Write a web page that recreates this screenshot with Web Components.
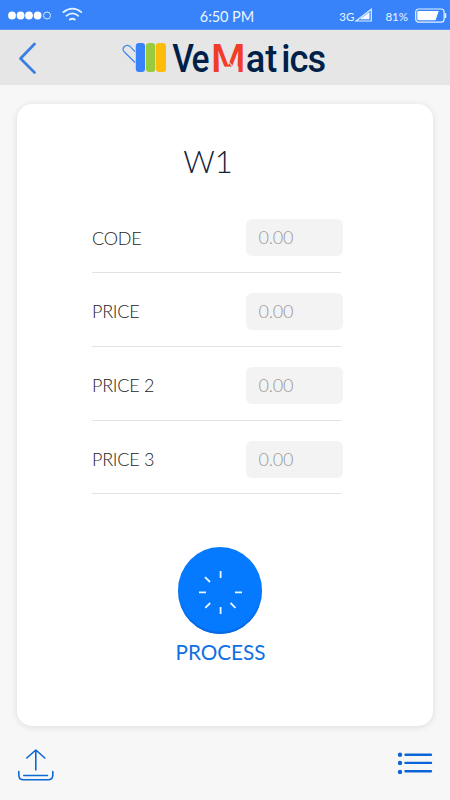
<!DOCTYPE html>
<html lang="en">
<head>
<meta charset="utf-8">
<title>VeMatics</title>
<style>
html,body{margin:0;height:100%}
body{background:#f7f7f7;font-family:Lato,"Liberation Sans",sans-serif;overflow:hidden}
</style>
</head>
<body>
<vm-app></vm-app>
<script>
function define(name, html, setup) {
  const t = document.createElement('template');
  t.innerHTML = html;
  customElements.define(name, class extends HTMLElement {
    constructor() {
      super();
      this.attachShadow({mode: 'open'}).appendChild(t.content.cloneNode(true));
      if (setup) setup(this.shadowRoot);
    }
  });
}

define('vm-status-bar', `
<style>
:host{display:flex;height:30px;box-sizing:border-box;background:#3983fa;color:#e9f6ff;border-bottom:1px solid #5c94f0;align-items:center;justify-content:space-between;flex:none}
svg{display:block;overflow:visible;flex:none}
.g{display:flex;align-items:center;width:150px}
.left{padding-left:8px;gap:11px;box-sizing:border-box}
.right{justify-content:flex-end;padding-right:4px;box-sizing:border-box}
.time{font-size:14.5px;line-height:20px;padding:4px 0 0 4px;white-space:nowrap;letter-spacing:-.05px}
.net{font-size:11.5px;line-height:14px;padding-top:5px;margin-right:1px}
.pct{font-size:11.5px;line-height:14px;padding-top:4px;margin:0 7px 0 13px}
.bat{margin-top:2px}
</style>
<div class="g left">
<svg width="43" height="10" viewBox="0 0 43 10" fill="#fff"><circle cx="4" cy="5.5" r="3.9"/><circle cx="12.6" cy="5.5" r="3.9"/><circle cx="21" cy="5.5" r="3.9"/><circle cx="29.6" cy="5.5" r="3.9"/><circle cx="39" cy="5.5" r="3.5" fill="none" stroke="#d5ecff" stroke-width="1"/></svg>
<svg width="20" height="14" viewBox="0 0 20 14" fill="none" stroke="#e4f4ff" stroke-width="1.7" stroke-linecap="round"><path d="M1.3 4.2Q10.5-2.8 19.3 4.2M4.3 7.8Q10.4 2.9 16.3 7.8"/><path d="M7.9 11.6Q10.4 9.8 12.7 11.6" stroke-width="1.9"/></svg>
</div>
<span class="time">6:50 PM</span>
<div class="g right">
<span class="net">3G</span>
<svg width="17" height="14" viewBox="0 0 17 14"><path d="M1 13L16.3 1.3V13Z" fill="none" stroke="#dff2ff" stroke-width="1.2"/><path d="M4.8 11.3L14.5 4V11.3Z" fill="#f2faff"/></svg>
<span class="pct">81%</span>
<svg class="bat" width="31" height="15" viewBox="0 0 31 15"><rect x=".7" y="1" width="28.4" height="13.2" rx="3" fill="none" stroke="#e4f4ff" stroke-width="1.2"/><path d="M3.5 3H23.8L20.5 12.3H3.5Q2.3 12.3 2.3 11V4.2Q2.3 3 3.5 3Z" fill="#fff"/><path d="M30.5 5.2V10" stroke="#e4f4ff" stroke-width="1.5"/></svg>
</div>`);

define('vm-logo', `
<style>
:host{display:block;width:204px;height:34px}
svg{display:block;overflow:visible}
text{font-family:Roboto,"Liberation Sans",sans-serif;font-size:39.5px;font-weight:500;fill:#001f49}
.m{fill:#f03c28}
.tail{font-size:39px}
</style>
<svg width="204" height="34" viewBox="0 0 204 34">
<path d="M13 21.5L2.2 10.8C-.8 7.3 3.2 2.7 7.8 5.2L13 10.7" fill="none" stroke="#3f84ec" stroke-width="1.2"/>
<rect x="13.8" y="2" width="9.2" height="29" rx="3" fill="#3983fa"/>
<rect x="24" y="2" width="9.2" height="29" rx="3" fill="#9acb3c"/>
<rect x="34" y="2" width="10" height="29" rx="3" fill="#fdbb0a"/>
<text transform="scale(.85 1)" x="59.2 81.8" y="31">Ve</text>
<text class="m" x="89" y="31">M</text>
<path d="M97 25.6H116.5V31.5H97Z" fill="#e6e6e6"/>
<path d="M106.3 20.5L110.8 26" stroke="#e6e6e6" stroke-width="1.1"/>
<text class="tail" transform="scale(.93 1)" x="133 154 171.2 180.2 199.6" y="31">atics</text>
</svg>`);

define('vm-header', `
<style>
:host{display:grid;grid-template-columns:104px auto 1fr;height:55px;background:#e6e6e6;align-items:center;flex:none;box-sizing:border-box;padding-left:18px}
svg{display:block}
::slotted(vm-logo){margin-top:1px}
</style>
<svg width="20" height="32" viewBox="0 0 20 32" fill="none" stroke="#397fe3" stroke-width="2.7" stroke-linecap="round" stroke-linejoin="round"><path d="M16.5 2L2.5 16.5L16.5 30.5"/></svg>
<slot></slot>`);

define('vm-field', `
<style>
:host{display:flex;height:73.8px;box-sizing:border-box;padding-top:4px;border-bottom:1px solid #e2e2e2;justify-content:space-between;align-items:center;color:#1c1c1c;font-size:18px;font-weight:300}
.label{line-height:24px;white-space:nowrap;letter-spacing:-.25px}
.value{box-sizing:border-box;width:97px;height:37px;border-radius:6px;background:#f3f3f3;color:#999;line-height:37px;padding-left:12.6px;margin-right:-2px;letter-spacing:-.2px}
</style>
<span class="label"><slot></slot></span><span class="value">0.00</span>`);

define('vm-process', `
<style>
:host{display:flex;flex-direction:column;align-items:center;color:#0f70e4}
.disc{width:84px;height:87px;border-radius:50%;background:#057aff;box-shadow:inset 0 -2px 1px #0868e0}
svg{display:block}
.label{font-size:20.7px;line-height:26px;margin-top:5px}
</style>
<div class="disc"><svg width="84" height="87" viewBox="0 0 84 87" stroke="#e9f8ff" stroke-width="1.8" fill="none"><path d="M42.6 24V31M42.6 60V67M21 45.3H28M57 45.3H64M27 30.2L32 35M27.3 60.8L32.2 56M52.5 56L57.5 60.8"/></svg></div>
<span class="label"><slot></slot></span>`);

define('vm-card', `
<style>
:host{display:flex;flex-direction:column;box-sizing:border-box;margin:19px 17px 0;height:622px;border-radius:15px;background:#fff;box-shadow:0 1px 7px rgba(0,0,0,.11);align-items:center;flex:none}
h1{margin:37px 34px 0 0;font-size:31px;line-height:40px;font-weight:300;color:#132139}
.fields{width:249px;margin:18.3px 17px 0 0}
vm-process{margin:53px 9px 0 0}
</style>
<h1>W1</h1>
<div class="fields"><vm-field>CODE</vm-field><vm-field>PRICE</vm-field><vm-field>PRICE 2</vm-field><vm-field>PRICE 3</vm-field></div>
<vm-process>PROCESS</vm-process>`);

define('vm-toolbar', `
<style>
:host{display:flex;justify-content:space-between;align-items:flex-start;padding:22px 17px 0 17px}
svg{display:block}
</style>
<svg width="38" height="34" viewBox="0 0 38 34" fill="none" stroke="#0b68d4" stroke-width="1.6" stroke-linecap="round" stroke-linejoin="round"><path d="M18.8 22V2.5M9.8 10L18.8 2L27.8 10M1.8 23.5V27Q1.8 31.7 6.5 31.7H31Q35.8 31.7 35.8 27V23.5M6.8 27.5H30.5"/></svg>
<svg width="36" height="26" viewBox="0 0 36 26" fill="#0b65d8"><circle cx="3" cy="6.7" r="2.2"/><circle cx="3" cy="15" r="2.2"/><circle cx="3" cy="24" r="2.2"/><path d="M8.5 6.7H34M8.5 14.9H34M8.5 23.2H34" stroke="#0b65d8" stroke-width="2.4" stroke-linecap="round"/></svg>`);

define('vm-app', `
<style>:host{display:flex;flex-direction:column;width:450px;height:800px}</style>
<vm-status-bar></vm-status-bar>
<vm-header><vm-logo></vm-logo></vm-header>
<vm-card></vm-card>
<vm-toolbar></vm-toolbar>`);
</script>
</body>
</html>
